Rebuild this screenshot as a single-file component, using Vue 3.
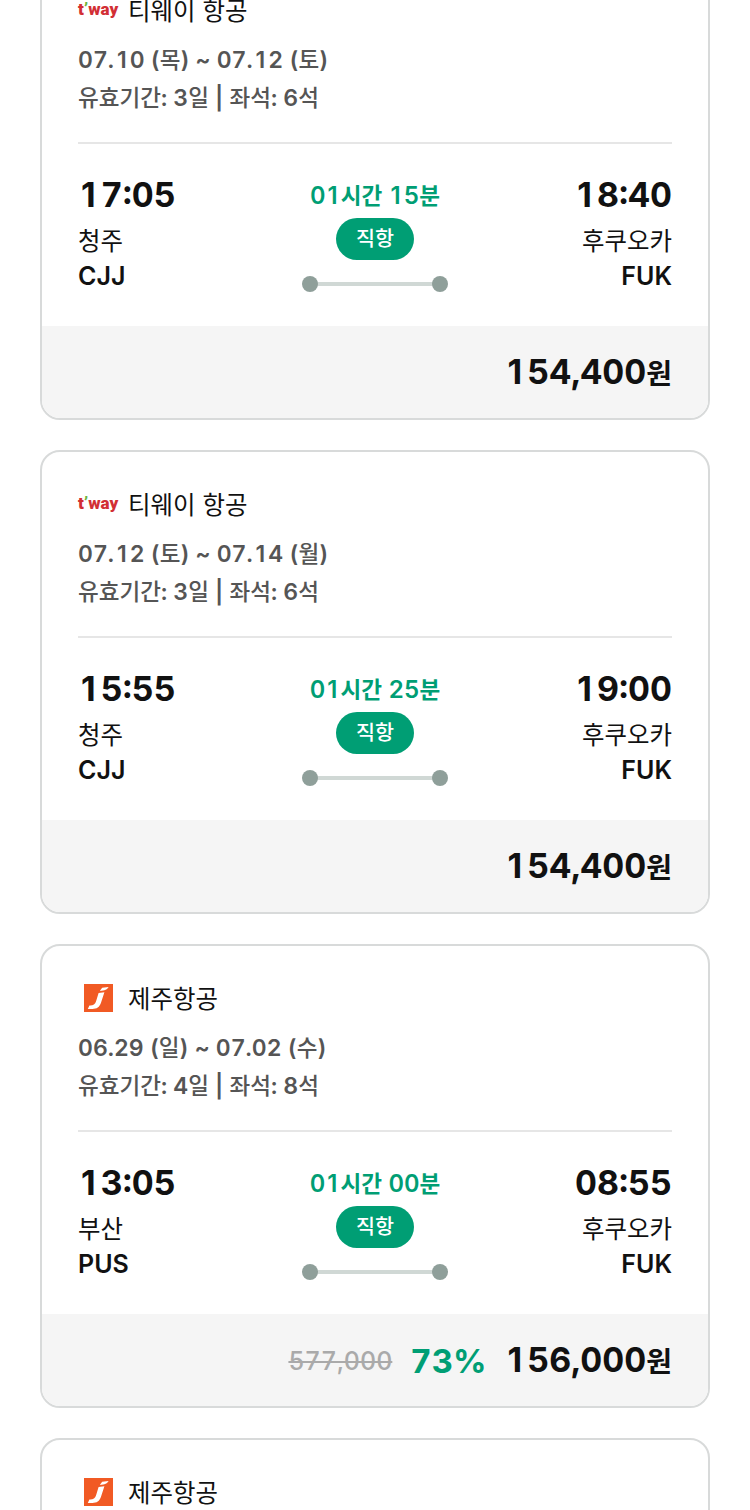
<script setup>
import { h } from 'vue'

// Splits a label into runs: Hangul keeps its own optical size, and the digit 1
// uses its plain form, padded to the width of the other figures.
const run = (part) => {
  if (part === '1') return h('span', { class: 'one' }, part)
  return /[가-힣]/.test(part) ? h('span', { class: 'ko' }, part) : part
}
const Mixed = ({ text }) =>
  h('span', { class: 'mixed' }, text.split(/([가-힣]+|1)/).filter(Boolean).map(run))
Mixed.props = ['text']

const flights = [
  { id: 1, airline: '티웨이 항공', logo: 'tway', dates: '07.10 (목) ~ 07.12 (토)', info: '유효기간: 3일 | 좌석: 6석', depart: '17:05', fromCity: '청주', from: 'CJJ', duration: '01시간 15분', arrive: '18:40', toCity: '후쿠오카', to: 'FUK', price: '154,400' },
  { id: 2, airline: '티웨이 항공', logo: 'tway', dates: '07.12 (토) ~ 07.14 (월)', info: '유효기간: 3일 | 좌석: 6석', depart: '15:55', fromCity: '청주', from: 'CJJ', duration: '01시간 25분', arrive: '19:00', toCity: '후쿠오카', to: 'FUK', price: '154,400' },
  { id: 3, airline: '제주항공', logo: 'jeju', dates: '06.29 (일) ~ 07.02 (수)', info: '유효기간: 4일 | 좌석: 8석', depart: '13:05', fromCity: '부산', from: 'PUS', duration: '01시간 00분', arrive: '08:55', toCity: '후쿠오카', to: 'FUK', original: '577,000', discount: '73%', price: '156,000' },
  { id: 4, airline: '제주항공', logo: 'jeju' },
]
</script>

<template>
  <main class="screen">
    <ul class="list">
      <li v-for="f in flights" :key="f.id" class="card">
        <header class="head">
          <div class="airline">
            <span class="logo" aria-hidden="true">
              <svg v-if="f.logo === 'tway'" class="mark" width="40" height="24" viewBox="0 0 40 24">
                <text class="tway" x="0" y="17">t<tspan class="leaf">’</tspan>way</text>
              </svg>
              <svg v-else width="29" height="28" viewBox="0 0 29 28">
                <rect width="29" height="28" fill="#f15a24" />
                <path d="M15.8 6.9 L18.2 3.8 L24.6 3 C23.4 5.4 20.8 6.6 15.8 6.9Z" fill="#fff" />
                <path d="M14.6 9 L20.4 8.2 L17 18.8 C15.5 23.2 12.8 25 8.4 25 L3.8 25 L5.4 21.4 C9 21.6 11 20.6 12 17.4 Z" fill="#fff" />
              </svg>
            </span>
            <Mixed :text="f.airline" />
          </div>
          <template v-if="f.dates">
            <p class="meta"><Mixed :text="f.dates" /></p>
            <p class="meta"><Mixed :text="f.info" /></p>
          </template>
        </header>
        <template v-if="f.price">
          <section class="route">
            <div class="stop">
              <strong class="time"><Mixed :text="f.depart" /></strong>
              <span class="city"><Mixed :text="f.fromCity" /></span>
              <span class="code">{{ f.from }}</span>
            </div>
            <div class="leg">
              <span class="duration"><Mixed :text="f.duration" /></span>
              <span class="badge"><Mixed text="직항" /></span>
              <span class="track"></span>
            </div>
            <div class="stop end">
              <strong class="time"><Mixed :text="f.arrive" /></strong>
              <span class="city"><Mixed :text="f.toCity" /></span>
              <span class="code">{{ f.to }}</span>
            </div>
          </section>
          <footer class="foot">
            <del v-if="f.original" class="original">{{ f.original }}</del>
            <span v-if="f.discount" class="discount">{{ f.discount }}</span>
            <strong class="price"><Mixed :text="f.price" /><span class="won">원</span></strong>
          </footer>
        </template>
      </li>
    </ul>
  </main>
</template>

<style>
body {
  background: #fff;
}
.mixed .ko {
  font-size: 0.94em;
}
.mixed .one {
  padding: 0 3px 0 2px;
  font-variant-numeric: normal;
}
.time .mixed .one,
.price .mixed .one {
  padding: 0 5px 0 3px;
}
.meta .mixed .one {
  padding: 0 3px;
}
.meta .mixed .ko {
  font-size: 0.98em;
  font-weight: 500;
}
</style>

<style scoped>
.screen {
  height: 100vh;
  overflow: hidden;
  color: #111;
  font-family: Inter, 'Noto Sans CJK KR', sans-serif;
  font-variant-numeric: tabular-nums;
}
.list {
  display: flex;
  flex-direction: column;
  gap: 30px;
  margin: -44px 0 0;
  padding: 0 40px;
  list-style: none;
}
.card {
  overflow: hidden;
  flex: none;
  border: 2px solid #d8dada;
  border-radius: 20px;
}
.head {
  margin: 0 36px;
  padding: 36px 0 25px;
}
.airline {
  display: flex;
  align-items: flex-start;
  gap: 10px;
  height: 32px;
  margin-bottom: 15px;
  font-size: 26px;
  line-height: 34px;
}
.logo {
  display: flex;
  align-items: center;
  justify-content: center;
  width: 40px;
  height: 32px;
}
.mark {
  overflow: visible;
}
.tway {
  fill: #d22f35;
  font-family: Roboto, sans-serif;
  font-size: 17px;
  font-weight: 900;
}
.leaf {
  fill: #6cb33f;
}
.meta {
  margin: 0;
  color: #555;
  font-size: 23px;
  font-weight: 600;
  line-height: 38px;
}
.route {
  display: grid;
  grid-template-columns: 1fr auto 1fr;
  margin: 0 36px;
  padding: 28px 0 32px;
  border-top: 2px solid #e6e6e6;
}
.stop {
  display: flex;
  flex-direction: column;
  font-size: 26px;
  line-height: 34px;
}
.end {
  align-items: flex-end;
}
.time {
  margin-bottom: 6px;
  font-size: 34px;
  font-weight: 700;
  line-height: 46px;
}
.code {
  font-size: 25px;
  font-weight: 600;
  line-height: 36px;
}
.leg {
  display: flex;
  flex-direction: column;
  align-items: center;
}
.duration {
  height: 46px;
  color: #009e74;
  font-size: 24px;
  font-weight: 600;
  line-height: 48px;
}
.badge {
  height: 42px;
  padding: 0 20px;
  border-radius: 21px;
  background: #009e74;
  color: #fff;
  font-size: 22px;
  font-weight: 500;
  line-height: 40px;
}
.track {
  display: flex;
  align-items: center;
  justify-content: space-between;
  width: 146px;
  height: 16px;
  margin-top: 16px;
  background: linear-gradient(#d0d8d5, #d0d8d5) center / 130px 4px no-repeat;
}
.track::before,
.track::after {
  width: 16px;
  height: 16px;
  border-radius: 50%;
  background: #8f9f9a;
  content: '';
}
.foot {
  display: flex;
  align-items: center;
  justify-content: flex-end;
  box-sizing: border-box;
  height: 92px;
  padding: 2px 36px 0;
  background: #f5f5f5;
}
.original {
  margin-right: 18px;
  color: #aaa;
  font-size: 25px;
  font-weight: 500;
}
.discount {
  margin-right: 18px;
  color: #009e74;
  font-size: 33px;
  font-weight: 700;
}
.price {
  font-size: 34px;
  font-weight: 700;
  line-height: 44px;
}
.won {
  font-size: 28px;
}
</style>
